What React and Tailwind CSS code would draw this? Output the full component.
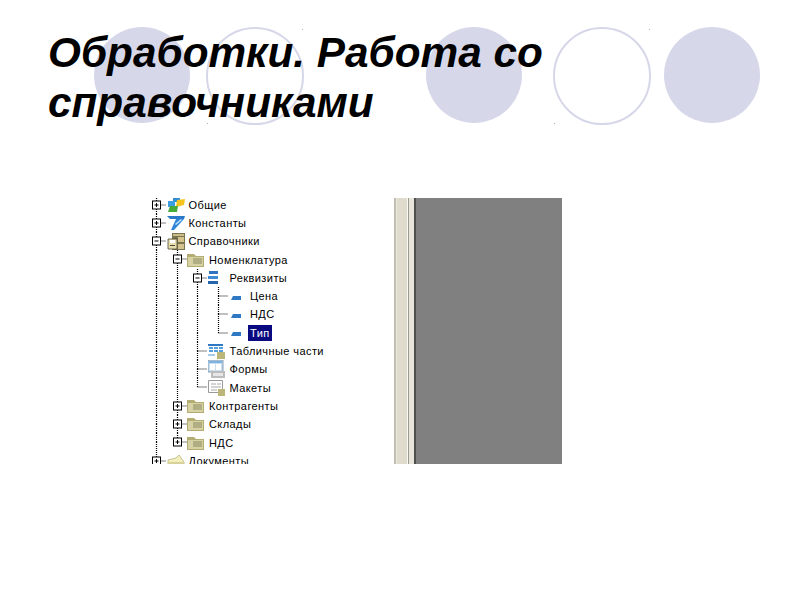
import React from 'react';

const CELL = 'w-[20.5px] h-[18.3px] shrink-0';

function Connector({ type }) {
  const hasBox = type === 'plus' || type === 'minus' || type === 'plusLast';
  const showDown = type === 'pipe' || type === 'tee' || type === 'plus' || type === 'minus';
  const showRight = type !== 'pipe';
  return (
    <svg className={CELL} viewBox="0 0 20.5 18.3">
      <g stroke="#000" strokeWidth="1.2" strokeDasharray="1 1" fill="none">
        <path d="M10.5 0V9" />
        {showDown && <path d="M10.5 9V18.3" />}
        {showRight && <path d="M10.5 9H20.5" />}
      </g>
      {hasBox && (
        <g>
          <rect x="6.5" y="5" width="8" height="8" fill="#fff" stroke="#000" />
          <path d="M8.5 9H12.5" stroke="#000" />
          {type !== 'minus' && <path d="M10.5 7V11" stroke="#000" />}
        </g>
      )}
    </svg>
  );
}

const IconCommon = () => (
  <svg className="w-[18px] h-[17px]" viewBox="0 0 18 17">
    <path d="M6 0h7v6H6z" fill="#2f8fd6" />
    <path d="M1 5h7v6H1z" fill="#3b9de2" />
    <path d="M10 4l8-1-1 6-8 2z" fill="#f4c51e" />
    <path d="M3 10h8l-1 6H1z" fill="#45ab3a" />
  </svg>
);

const IconConst = () => (
  <svg className="w-[18px] h-[17px]" viewBox="0 0 18 17">
    <path d="M0 2h18l-1 3H3z" fill="#2a78c8" />
    <path d="M9 5h8L7 16H4z" fill="#2f86d8" />
    <path d="M8 10l6-5 1 1-6 5z" fill="#bfe0fa" />
  </svg>
);

const IconCabinet = () => (
  <svg className="w-[18px] h-[17px]" viewBox="0 0 18 17">
    <path d="M5 0h13v17H5z" fill="#7b7450" />
    <path d="M6 1h11v2H6z" fill="#c9bd8a" />
    <path d="M11 4h6v5h-6zM11 11h6v5h-6z" fill="#d3c48f" />
    <path d="M1 6h9v10H1z" fill="#e7dcae" stroke="#4f4b35" strokeWidth="0.8" />
    <path d="M3 7h5v3H3z" fill="#fff" />
    <path d="M3 12h5v1H3z" fill="#4f4b35" />
  </svg>
);

const IconFolder = () => (
  <svg className="w-[17px] h-[14px]" viewBox="0 0 17 14">
    <path d="M0 1h7l2 2h8v11H0z" fill="#b3ad73" />
    <path d="M1 4h15v9H1z" fill="#d6d2a4" />
    <path d="M6 6h9M6 8h9M6 10h9" stroke="#8b8963" strokeWidth="1" />
  </svg>
);

const IconStack = () => (
  <svg className="w-[10px] h-[13px]" viewBox="0 0 10 13">
    <path d="M1 0h9v3H1z" fill="#2f74c0" />
    <path d="M0 5h10v3H0z" fill="#3d8ad6" />
    <path d="M0 10h10v3H0z" fill="#2466ae" />
  </svg>
);

const IconAttr = () => (
  <svg className="w-[10px] h-[4px] ml-[3px] mt-[3px]" viewBox="0 0 10 4">
    <path d="M2 0h8v4H0z" fill="#2f78c4" />
  </svg>
);

const IconTable = () => (
  <svg className="w-[17px] h-[16px]" viewBox="0 0 17 16">
    <path d="M0 1h15v10H0z" fill="#fff" />
    <path d="M0 1h15v2H0z" fill="#2f78c4" />
    <path d="M1 4h4v2H1zM6 4h4v2H6zM11 4h4v2h-4zM1 7h4v2H1zM6 7h4v2H6zM11 7h4v2h-4z" fill="#58a0dc" />
    <path d="M9 9h8v7H9z" fill="#bdb67b" />
    <path d="M0 11h7v2H0z" fill="#a8cbe8" />
  </svg>
);

const IconForm = () => (
  <svg className="w-[17px] h-[18px]" viewBox="0 0 17 18">
    <path d="M0 0h15v12H0z" fill="#c9def0" stroke="#6d8aa6" strokeWidth="0.8" />
    <path d="M1 1h13v2H1z" fill="#7fb2dc" />
    <path d="M2 4h5v6H2zM8 4h5v6H8z" fill="#fff" />
    <path d="M3 11h14v7H3z" fill="#bcbcbc" />
    <path d="M5 13h10v3H5z" fill="#e6e6e6" />
  </svg>
);

const IconLayout = () => (
  <svg className="w-[17px] h-[17px]" viewBox="0 0 17 17">
    <path d="M0.5 1.5h14v12h-14z" fill="#fff" stroke="#9a9a9a" />
    <path d="M3 5h5M9 5h4M3 8h10M3 11h6" stroke="#a9a9a9" />
    <path d="M10 10h7v7h-7z" fill="#bdb67b" />
  </svg>
);

const IconOpenFolder = () => (
  <svg className="w-[20px] h-[14px] mt-[2px]" viewBox="0 0 20 14">
    <path d="M1 5l8-2 3-3 5 7v7H1z" fill="#f3eebd" stroke="#b9b27a" strokeWidth="0.8" />
    <path d="M1 7h16v7H1z" fill="#d8d29a" />
  </svg>
);

const rows = [
  { guides: [], node: 'plus', icon: <IconCommon />, text: 'Общие' },
  { guides: [], node: 'plus', icon: <IconConst />, text: 'Константы' },
  { guides: [], node: 'minus', icon: <IconCabinet />, text: 'Справочники' },
  { guides: [1], node: 'minus', icon: <IconFolder />, text: 'Номенклатура' },
  { guides: [1, 1], node: 'minus', icon: <IconStack />, text: 'Реквизиты' },
  { guides: [1, 1, 1], node: 'tee', icon: <IconAttr />, text: 'Цена' },
  { guides: [1, 1, 1], node: 'tee', icon: <IconAttr />, text: 'НДС' },
  { guides: [1, 1, 1], node: 'elbow', icon: <IconAttr />, text: 'Тип', selected: true },
  { guides: [1, 1], node: 'tee', icon: <IconTable />, text: 'Табличные части' },
  { guides: [1, 1], node: 'tee', icon: <IconForm />, text: 'Формы' },
  { guides: [1, 1], node: 'elbow', icon: <IconLayout />, text: 'Макеты' },
  { guides: [1], node: 'plus', icon: <IconFolder />, text: 'Контрагенты' },
  { guides: [1], node: 'plus', icon: <IconFolder />, text: 'Склады' },
  { guides: [1], node: 'plusLast', icon: <IconFolder />, text: 'НДС' },
  { guides: [], node: 'plus', icon: <IconOpenFolder />, text: 'Документы' },
];

function TreeRow({ row }) {
  return (
    <div className="flex items-center h-[18.3px]">
      {row.guides.map((_, i) => (
        <Connector key={i} type="pipe" />
      ))}
      <Connector type={row.node} />
      <div className="w-[22px] shrink-0 flex items-center">{row.icon}</div>
      <span
        className={
          row.selected
            ? 'bg-[#0a0a80] text-white px-[2px] -ml-[2px] leading-[16px]'
            : 'text-black leading-[16px]'
        }
      >
        {row.text}
      </span>
    </div>
  );
}

function Circle({ outline, className }) {
  if (outline) {
    return (
      <div className={`relative w-[98px] h-[98px] rounded-full border-2 border-[#d7d7ea] bg-white ${className}`}>
        <div className="absolute -right-[1px] top-0 w-[1px] h-[1px] bg-[#b0b0b0]" />
        <div className="absolute -left-[1px] -bottom-[1px] w-[1px] h-[1px] bg-[#b0b0b0]" />
      </div>
    );
  }
  return <div className={`w-[96px] h-[96px] rounded-full bg-[#d7d7ea] ${className}`} />;
}

export default function App() {
  return (
    <div className="relative w-[800px] h-[600px] bg-white overflow-hidden font-['Liberation_Sans',Arial,sans-serif]">
      <div className="flex items-start pt-[27px] pl-[94px]">
        <Circle />
        <Circle outline className="ml-[16px]" />
        <Circle className="ml-[122px]" />
        <Circle outline className="ml-[31px]" />
        <Circle className="ml-[13px]" />
      </div>

      <h1 className="absolute left-[48px] top-[28px] w-[520px] text-[42.3px] leading-[50px] font-bold italic text-black">
        Обработки. Работа со справочниками
      </h1>

      <div className="flex mt-[73px] ml-[150px] w-[412px] h-[266px] overflow-hidden">
        <div className="w-[244px] shrink-0 overflow-hidden text-[11px] tracking-[0.42px]">
          <div className="-mt-[2.5px] -ml-[4px]">
            {rows.map((row, i) => (
              <TreeRow key={i} row={row} />
            ))}
          </div>
        </div>
        <div className="flex flex-1">
          <div className="w-[2px] bg-[#c0bdb3]" />
          <div className="w-[1px] bg-[#ece9df]" />
          <div className="w-[10px] bg-[#dfdccd]" />
          <div className="w-[1px] bg-[#f8f8f4]" />
          <div className="w-[1px] bg-[#9a9a90]" />
          <div className="w-[5px] bg-[#e8e6da]" />
          <div className="w-[2px] bg-[#4f4f4f]" />
          <div className="flex-1 bg-[#808080]" />
        </div>
      </div>
    </div>
  );
}
